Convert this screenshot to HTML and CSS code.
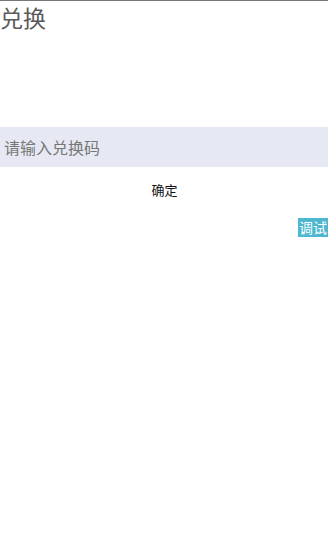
FILE: index.html
```html
<!DOCTYPE html>
<html>
<head>
<meta charset="utf-8">
<link rel="stylesheet" href="styles.css">
</head>
<body>
<div class="page">
  <div class="title">兑换</div>
  <div class="spacer"></div>
  <div class="input-box"><span class="placeholder">请输入兑换码</span></div>
  <div class="confirm">确定</div>
  <div class="debug-row"><span class="debug">调试</span></div>
</div>
</body>
</html>
```
FILE: styles.css
```css
html, body {
  margin: 0;
  padding: 0;
  background: #fff;
}
body {
  font-family: "Noto Sans CJK SC", "Noto Sans", sans-serif;
  border-top: 1px solid #777;
}
.page {
  display: flex;
  flex-direction: column;
}
.title {
  font-size: 23px;
  line-height: 32px;
  color: #5a5a5a;
  height: 32px;
}
.spacer {
  height: 94px;
}
.input-box {
  height: 40px;
  background: #e6e9f4;
  display: flex;
  align-items: center;
  padding-left: 4px;
}
.placeholder {
  font-size: 16px;
  color: #777;
}
.confirm {
  text-align: center;
  font-size: 13px;
  color: #111;
  margin-top: 14px;
  line-height: 18px;
  padding-left: 1px;
}
.debug-row {
  display: flex;
  justify-content: flex-end;
  margin-top: 19px;
}
.debug {
  background: #4db7cf;
  color: #fff;
  font-size: 14px;
  line-height: 19px;
  padding: 0 1px;
}
```
